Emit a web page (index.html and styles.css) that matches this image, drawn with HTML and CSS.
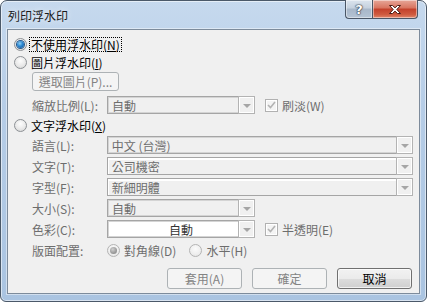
FILE: index.html
```html
<!DOCTYPE html>
<html lang="zh-Hant">
<head>
    <meta charset="UTF-8">
    <title>列印浮水印</title>
    <link rel="stylesheet" href="styles.css">
</head>
<body>
    <div class="window">
        <div class="titlebar">
            <span class="title">列印浮水印</span>
            <div class="caption-buttons">
                <div class="cap-btn help">?</div>
                <div class="cap-btn close">
                    <svg width="12" height="9" viewBox="0 0 12 9">
                        <polygon points="0.5,0.5 3.5,0.5 6,2.8 8.5,0.5 11.5,0.5 7.8,4.5 11.5,8.5 8.5,8.5 6,6.2 3.5,8.5 0.5,8.5 4.2,4.5" fill="#fff" stroke="#4a1c14" stroke-width="1"/>
                    </svg>
                </div>
            </div>
        </div>

        <div class="client">
            <div class="row r-first">
                <span class="radio on"><span class="dot"></span></span>
                <span class="focus">不使用浮水印(<u>N</u>)</span>
            </div>
            <div class="row r-radio">
                <span class="radio"></span>
                <span class="radio-text">圖片浮水印(<u>I</u>)</span>
            </div>
            <div class="row r-button indent">
                <div class="btn disabled pick">選取圖片(P)...</div>
            </div>
            <div class="row r-scale indent">
                <span class="label">縮放比例(L):</span>
                <div class="combo narrow">
                    <span class="value">自動</span>
                    <span class="arrow"><i></i></span>
                </div>
                <span class="check"><svg width="9" height="8" viewBox="0 0 9 8"><polyline points="1,4 3.5,6.5 8,1" fill="none" stroke="#b3b3b3" stroke-width="1.6"/></svg></span>
                <span class="check-text">刷淡(W)</span>
            </div>
            <div class="row r-radio r-text">
                <span class="radio"></span>
                <span class="radio-text">文字浮水印(<u>X</u>)</span>
            </div>
            <div class="row r-field indent">
                <span class="label">語言(L):</span>
                <div class="combo wide">
                    <span class="value">中文 (台灣)</span>
                    <span class="arrow"><i></i></span>
                </div>
            </div>
            <div class="row r-field indent">
                <span class="label">文字(T):</span>
                <div class="combo wide edit">
                    <span class="value">公司機密</span>
                    <span class="arrow"><i></i></span>
                </div>
            </div>
            <div class="row r-field indent">
                <span class="label">字型(F):</span>
                <div class="combo wide edit">
                    <span class="value">新細明體</span>
                    <span class="arrow"><i></i></span>
                </div>
            </div>
            <div class="row r-field indent">
                <span class="label">大小(S):</span>
                <div class="combo narrow">
                    <span class="value">自動</span>
                    <span class="arrow"><i></i></span>
                </div>
            </div>
            <div class="row r-field indent">
                <span class="label">色彩(C):</span>
                <div class="combo narrow color">
                    <span class="value">自動</span>
                    <span class="arrow"><i></i></span>
                </div>
                <span class="check"><svg width="9" height="8" viewBox="0 0 9 8"><polyline points="1,4 3.5,6.5 8,1" fill="none" stroke="#b3b3b3" stroke-width="1.6"/></svg></span>
                <span class="check-text">半透明(E)</span>
            </div>
            <div class="row r-layout indent">
                <span class="label">版面配置:</span>
                <span class="radio off-on"><span class="dot"></span></span>
                <span class="radio-text dim">對角線(D)</span>
                <span class="radio off second"></span>
                <span class="radio-text dim">水平(H)</span>
            </div>
            <div class="row r-actions">
                <div class="btn disabled">套用(A)</div>
                <div class="btn disabled">確定</div>
                <div class="btn default">取消</div>
            </div>
        </div>
    </div>
</body>
</html>
```

FILE: styles.css
```css
* {
    box-sizing: border-box;
}

body {
    margin: 0;
    background: #fff;
    font-family: "Noto Sans CJK TC", "Noto Sans", sans-serif;
    font-size: 12px;
    color: #000;
}

.window {
    width: 427px;
    height: 302px;
    display: flex;
    flex-direction: column;
    padding: 0 6px 7px 6px;
    border: 1px solid #4b5969;
    border-radius: 7px 7px 6px 6px;
    background: linear-gradient(180deg, #c6d9ee 0%, #b6cde7 35%, #aac4e1 100%);
    box-shadow: inset 0 0 0 1px rgba(255, 255, 255, 0.55);
}

/* title bar */
.titlebar {
    height: 28px;
    display: flex;
    justify-content: space-between;
}

.title {
    align-self: center;
    margin-left: 1px;
    margin-top: 1px;
    color: #1a1a1a;
    text-shadow: 0 0 6px rgba(255, 255, 255, 0.9);
}

.caption-buttons {
    display: flex;
    margin-top: -1px;
    margin-right: 2px;
}

.cap-btn {
    height: 19px;
    display: flex;
    align-items: center;
    justify-content: center;
    border: 1px solid #4a5666;
    border-top: none;
    box-shadow: inset 0 0 0 1px rgba(255, 255, 255, 0.45);
}

.help {
    width: 27px;
    border-right: none;
    border-radius: 0 0 0 4px;
    background: linear-gradient(180deg, #dbe4ee 0%, #c5d1de 45%, #a8b7c9 50%, #b4c3d4 100%);
    font-family: "DejaVu Sans", sans-serif;
    font-weight: bold;
    font-size: 13px;
    color: #fff;
    text-shadow: 0 0 1px #2c3440, 0 0 1px #2c3440, 0 0 2px #2c3440;
}

.close {
    width: 46px;
    border-radius: 0 0 4px 0;
    background: linear-gradient(180deg, #e7a799 0%, #d8735f 45%, #c3402b 50%, #cf5a3f 80%, #e0866a 100%);
}

/* client area */
.client {
    flex: 1;
    display: flex;
    flex-direction: column;
    padding: 6px 6px 0 6px;
    background: #f0f0f0;
    border: 1px solid #7d8b9b;
    box-shadow: 0 0 0 1px rgba(255, 255, 255, 0.45);
}

.row {
    display: flex;
    align-items: center;
}

.indent {
    padding-left: 18px;
}

.r-first {
    height: 16px;
}

.r-radio {
    height: 16px;
    margin-top: 2px;
}

.r-button {
    height: 19px;
    margin-top: 2px;
}

.r-scale {
    height: 18px;
    margin-top: 5px;
}

.r-text {
    margin-top: 3px;
}

.r-field {
    height: 18px;
    margin-top: 3px;
}

.r-layout {
    height: 16px;
    margin-top: 4px;
}

.r-actions {
    justify-content: flex-end;
    gap: 10px;
    margin-top: 10px;
    padding-right: 1px;
}

.label {
    width: 75px;
    color: #6d6d6d;
}

/* radios */
.radio {
    width: 13px;
    height: 13px;
    display: flex;
    align-items: center;
    justify-content: center;
    border-radius: 50%;
    border: 1px solid #8d9195;
    background: radial-gradient(circle at 50% 35%, #fdfdfd 0%, #e9e9e9 55%, #d2d2d2 100%);
}

.radio .dot {
    width: 7px;
    height: 7px;
    border-radius: 50%;
}

.radio.on .dot {
    background: radial-gradient(circle at 40% 35%, #8fd0f5 0%, #2a86d0 45%, #0c4c92 100%);
    box-shadow: 0 0 0 1px #25578c;
}

.radio.off,
.radio.off-on {
    border-color: #b4b4b4;
    background: radial-gradient(circle at 50% 35%, #fbfbfb 0%, #eeeeee 60%, #e0e0e0 100%);
}

.radio.off-on .dot {
    background: radial-gradient(circle at 40% 35%, #d0d0d0 0%, #9a9a9a 60%, #7f7f7f 100%);
}

.radio.second {
    margin-left: 13px;
}

.radio-text {
    margin-left: 4px;
}

.radio-text.dim {
    color: #6d6d6d;
}

.focus {
    margin-left: 2px;
    padding: 0 1px;
    border: 1px dotted #000;
    line-height: 13px;
}

/* buttons */
.btn {
    width: 75px;
    height: 21px;
    display: flex;
    align-items: center;
    justify-content: center;
    border-radius: 3px;
}

.btn.disabled {
    border: 1px solid #adb2b5;
    background: #f4f4f4;
    color: #838383;
}

.btn.pick {
    width: 87px;
    height: 19px;
}

.btn.default {
    border: 1px solid #707070;
    background: linear-gradient(180deg, #f2f2f2 0%, #ebebeb 50%, #dddddd 50%, #cfcfcf 100%);
    box-shadow: inset 0 0 0 1px rgba(255, 255, 255, 0.7);
    color: #000;
}

/* combos */
.combo {
    height: 18px;
    display: flex;
    border: 1px solid #a5a5a5;
    box-shadow: inset 0 0 0 1px #d4d4d4;
    background: #f0f0f0;
    color: #6d6d6d;
}

.combo.narrow {
    width: 148px;
}

.combo.wide {
    width: 307px;
}

.combo.edit {
    box-shadow: inset 0 1px 0 1px #fff;
}

.combo.color {
    background: #fff;
}

.combo .value {
    flex: 1;
    display: flex;
    align-items: center;
    padding-left: 4px;
}

.combo.color .value {
    justify-content: center;
    padding-left: 16px;
    color: #333;
}

.combo .arrow {
    width: 17px;
    display: flex;
    align-items: center;
    justify-content: center;
    border: 1px solid #b3b3b3;
    border-width: 1px 1px 1px 1px;
    margin: -1px -1px -1px 0;
    background: #f0f0f0;
    box-shadow: inset 0 0 0 1px #fff;
}

.combo .arrow i {
    width: 0;
    height: 0;
    margin-top: 2px;
    border-left: 4px solid transparent;
    border-right: 4px solid transparent;
    border-top: 4px solid #a5a5a5;
}

/* checkboxes */
.check {
    width: 13px;
    height: 13px;
    margin-left: 10px;
    display: flex;
    align-items: center;
    justify-content: center;
    border: 1px solid #b1b1b1;
    background: #f4f4f4;
    box-shadow: inset 0 0 0 1px #fff;
}

.check-text {
    margin-left: 4px;
    color: #6d6d6d;
}
```
